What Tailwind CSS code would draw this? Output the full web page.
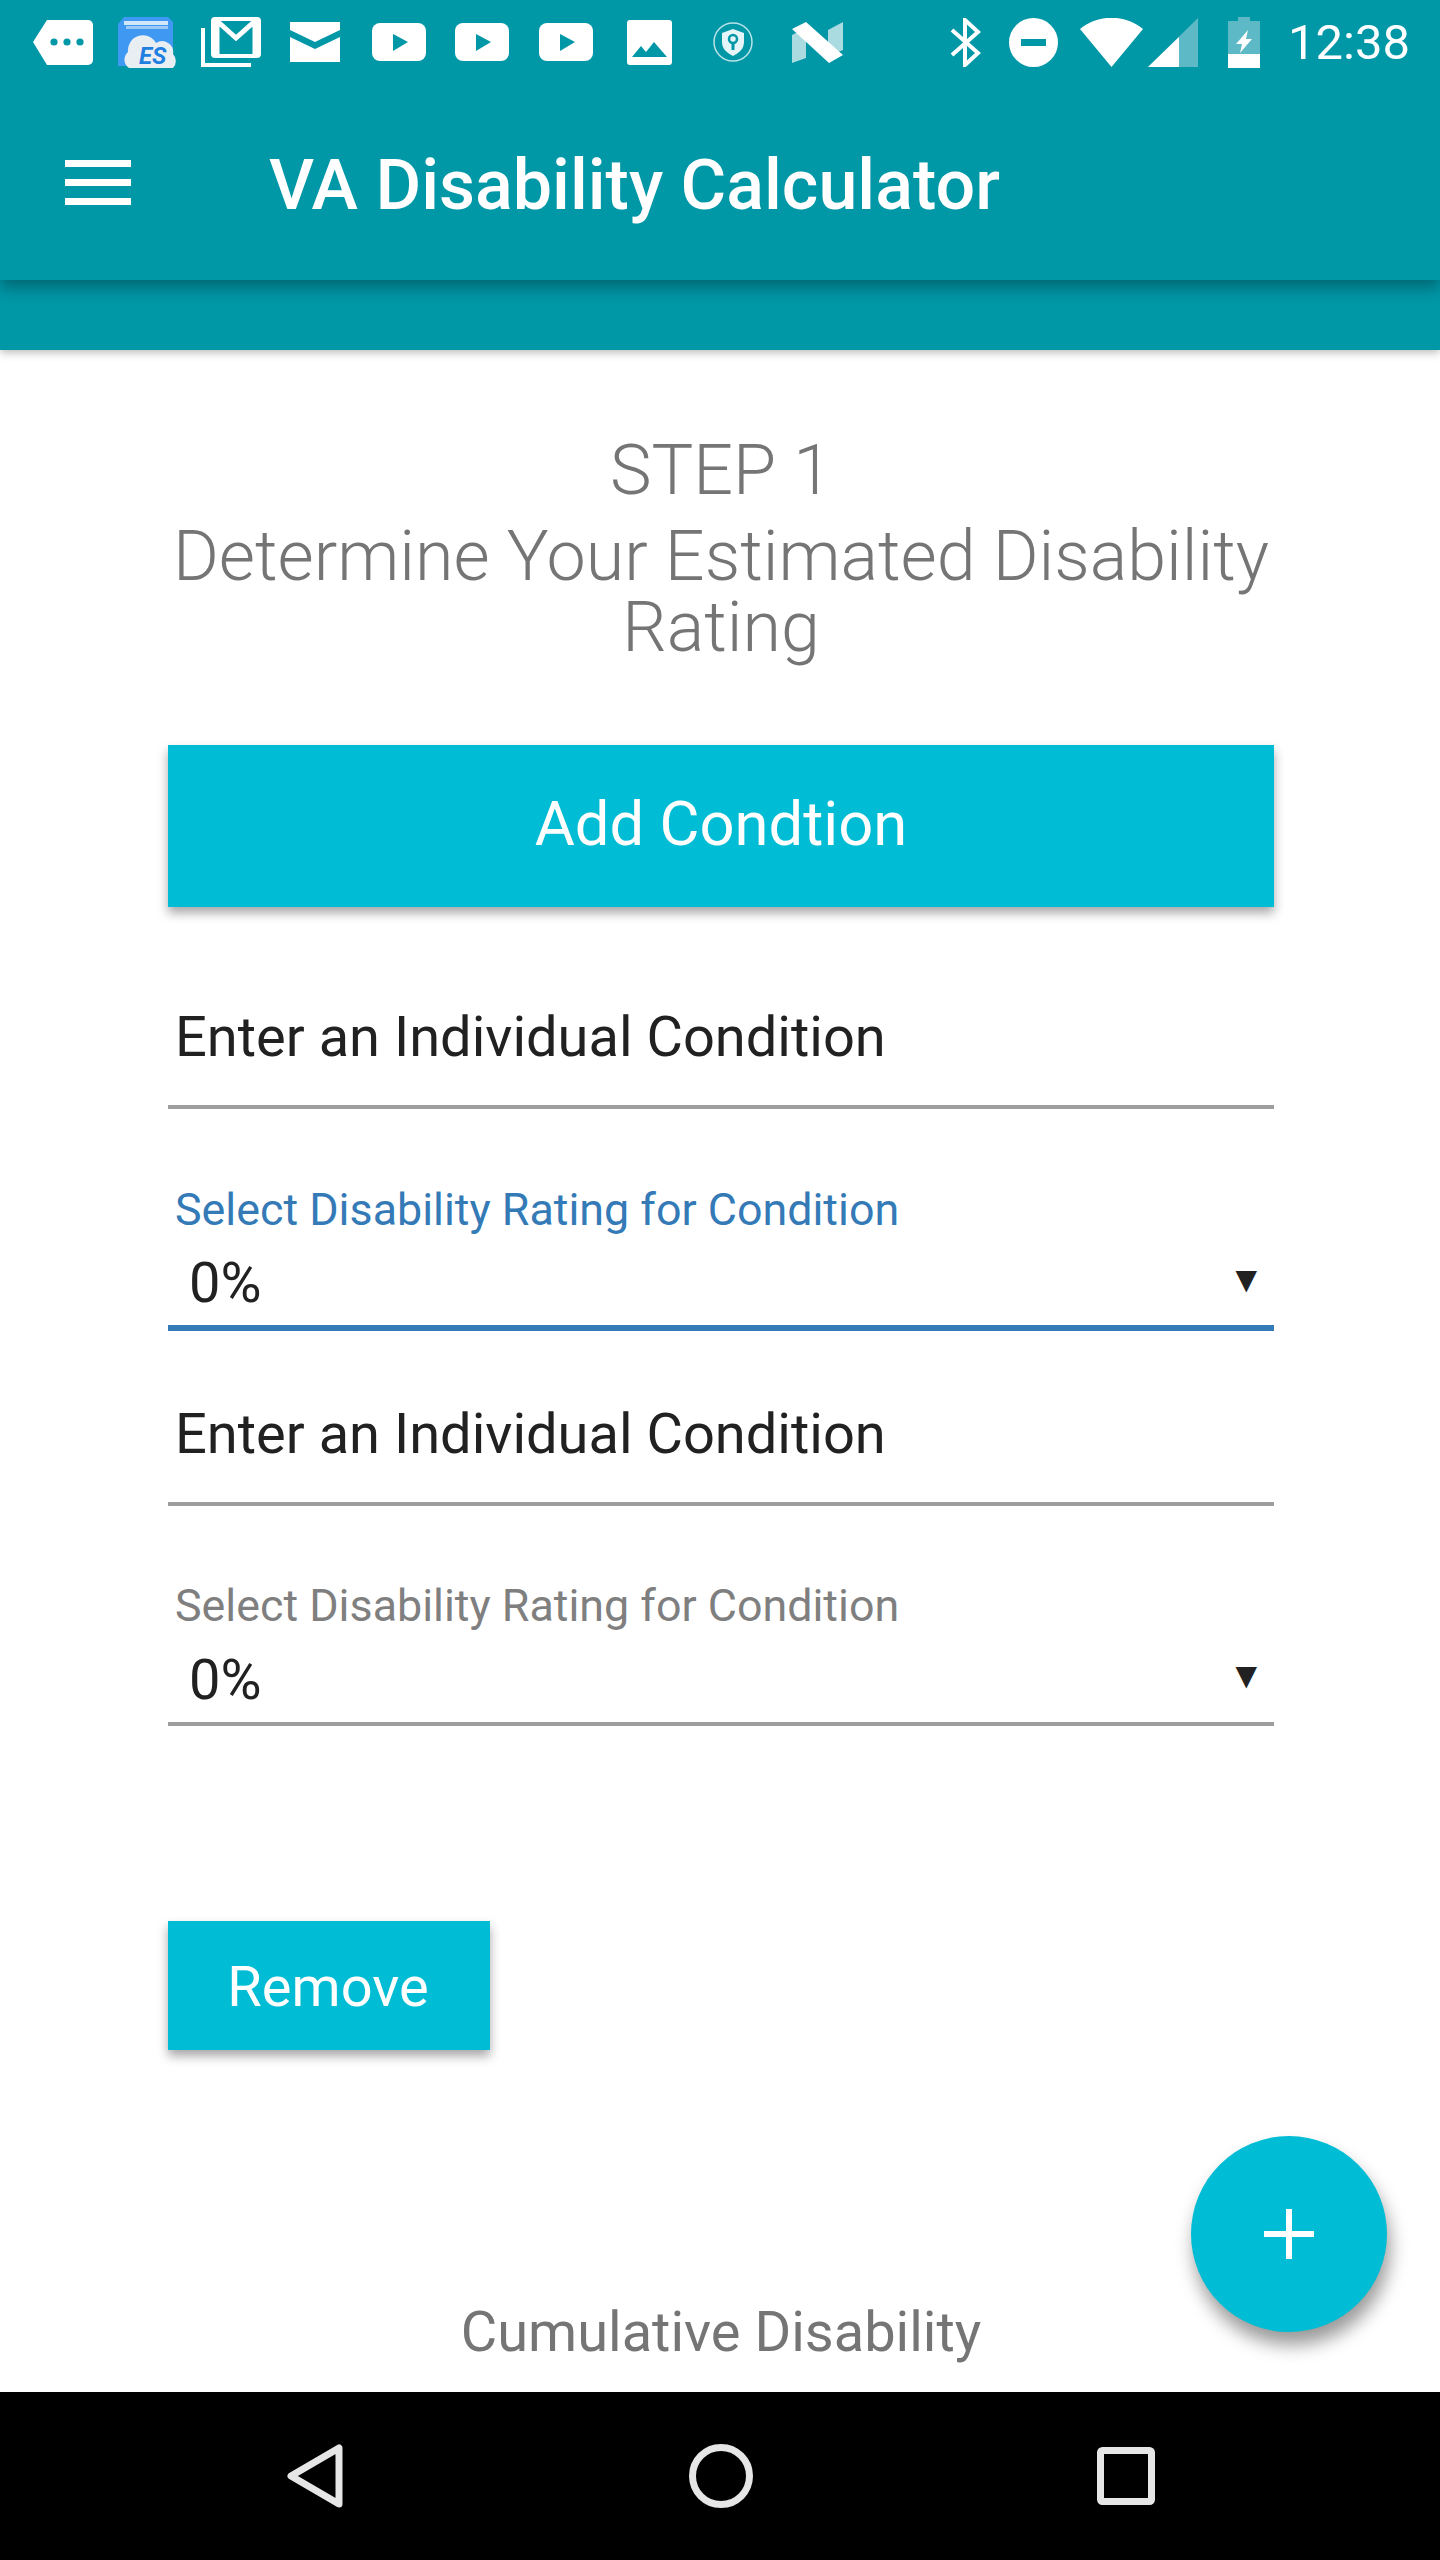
<!DOCTYPE html>
<html lang="en">
<head>
<meta charset="utf-8" />
<meta name="viewport" content="width=device-width, initial-scale=1.0" />
<title>VA Disability Calculator</title>
<script src="https://cdn.jsdelivr.net/npm/@tailwindcss/browser@4"></script>
</head>
<body class="bg-white font-['Roboto',sans-serif]">
<div class="relative flex flex-col w-[1440px] h-[2560px] overflow-hidden">

  <!-- status + toolbar -->
  <header class="relative z-20 bg-[#0097a7] h-[280px] shadow-[0_8px_14px_rgba(0,0,0,0.3)]">
    <div class="flex items-center h-[84px] pl-[33px] text-white">
      <svg class="w-[60px] h-[45px]" viewBox="0 0 60 45" fill="#fff"><path d="M14 0H55a5 5 0 0 1 5 5V40a5 5 0 0 1-5 5H14L0 22Z"/><g fill="#0097a7"><circle cx="21" cy="22" r="3.6"/><circle cx="34" cy="22" r="3.6"/><circle cx="47" cy="22" r="3.6"/></g></svg>
      <svg class="w-[58px] h-[56px] ml-[25px]" viewBox="0 -2 58 56"><path d="M0 8 6 1H50l5 5V50H0Z" fill="#3f98f2"/><path d="M6 5H50V9H6Z" fill="#cfe6fb"/><path d="M8 10H50v3H8Z" fill="#9cc9f5"/><path d="M11 52a10 10 0 0 1-1-16 15 15 0 0 1 28-9 11 11 0 0 1 17 11 10 10 0 0 1 0 14Z" fill="#e9eef2"/><text x="21" y="48" font-family="Roboto" font-size="24" font-weight="700" font-style="italic" fill="#1f7fe0">ES</text></svg>
      <svg class="w-[60px] h-[50px] ml-[25px]" viewBox="0 0 60 50" fill="none" stroke="#fff"><path d="M2 11V48H50" stroke-width="4"/><rect x="12" y="2" width="46" height="37" rx="2" stroke-width="4"/><path d="M16 38V4L35 21 54 4V38" stroke-width="5"/></svg>
      <svg class="w-[50px] h-[40px] ml-[29px]" viewBox="0 0 50 40" fill="#fff"><path d="M0 0H50V8L25 20 0 8Z"/><path d="M0 15 25 27 50 15V40H0Z"/></svg>
      <svg class="w-[54px] h-[38px] ml-[32px]" viewBox="0 0 54 38"><rect width="54" height="38" rx="8" fill="#fff"/><path d="M21 11 36 19 21 28Z" fill="#0097a7"/></svg>
      <svg class="w-[54px] h-[38px] ml-[29px]" viewBox="0 0 54 38"><rect width="54" height="38" rx="8" fill="#fff"/><path d="M21 11 36 19 21 28Z" fill="#0097a7"/></svg>
      <svg class="w-[54px] h-[38px] ml-[30px]" viewBox="0 0 54 38"><rect width="54" height="38" rx="8" fill="#fff"/><path d="M21 11 36 19 21 28Z" fill="#0097a7"/></svg>
      <svg class="w-[45px] h-[45px] ml-[34px]" viewBox="0 0 45 45"><rect width="45" height="45" rx="3" fill="#fff"/><path d="M5 37 14 26 19 32 27 22 40 37Z" fill="#0097a7"/></svg>
      <svg class="w-[40px] h-[40px] ml-[41px]" viewBox="0 0 40 40"><circle cx="20" cy="20" r="19" fill="none" stroke="#b9e3e8" stroke-width="1.5"/><path d="M20 7 31 11V20C31 27 26 31 20 34 14 31 9 27 9 20V11Z" fill="#e6f5f7"/><circle cx="20" cy="17" r="4" fill="none" stroke="#0097a7" stroke-width="2.5"/><path d="M20 21V28" stroke="#0097a7" stroke-width="3"/></svg>
      <svg class="w-[51px] h-[41px] ml-[39px]" viewBox="0 0 51 41"><path d="M0 13 14 6V36L0 41Z" fill="#a9dbe1"/><path d="M36 8 51 0V28L36 34Z" fill="#a9dbe1"/><path d="M0 7 14 0 51 33 37 41Z" fill="#fff"/></svg>
      <svg class="w-[31px] h-[49px] ml-[107px]" viewBox="0 0 31 49" fill="none" stroke="#fff" stroke-width="4"><path d="M2 12 28 35 15 47V2L28 14 2 37"/></svg>
      <svg class="w-[49px] h-[49px] ml-[28px]" viewBox="0 0 49 49"><circle cx="24.500" cy="24.500" r="24.500" fill="#fff"/><rect x="12" y="21" width="25" height="7" fill="#0097a7"/></svg>
      <svg class="w-[63px] h-[49px] ml-[22px]" viewBox="0 0 63 49"><path d="M0 11C18-4 45-4 63 11L31.500 49Z" fill="#fff"/></svg>
      <svg class="w-[50px] h-[49px] ml-[5px]" viewBox="0 0 50 49"><path d="M50 0V49H0Z" fill="#5cb9c5"/><path d="M31 19V49H0Z" fill="#fff"/></svg>
      <svg class="w-[32px] h-[51px] ml-[30px]" viewBox="0 0 32 51"><path d="M10 0H22V4H32V37H0V4H10Z" fill="#5cb9c5"/><path d="M0 37H32V51H0Z" fill="#fff"/><path d="M20 13 8 27H14L12 36 24 22H18Z" fill="#fff"/></svg>
      <span class="ml-[28px] text-[49px] leading-none">12:38</span>
    </div>
    <div class="flex items-center h-[196px] pl-[65px]">
      <div class="flex flex-col gap-[12px] w-[66px]">
        <span class="block h-[7px] bg-white"></span>
        <span class="block h-[7px] bg-white"></span>
        <span class="block h-[7px] bg-white"></span>
      </div>
      <h1 class="ml-[138px] pt-[6px] text-[70px] leading-none font-medium text-white">VA Disability Calculator</h1>
    </div>
  </header>
  <div class="relative z-10 bg-[#0097a7] h-[70px] shrink-0 shadow-[0_3px_8px_rgba(0,0,0,0.25)]"></div>

  <!-- page -->
  <main class="relative flex-1 bg-white pl-[168px] pr-[166px] pt-[84px]">
    <div class="text-center text-[#757575] font-light">
      <p class="text-[70px] leading-[72px]">STEP 1</p>
      <h2 class="text-[70px] leading-[71px] mt-[15px]">Determine Your Estimated Disability Rating</h2>
    </div>

    <button class="block w-full h-[162px] mt-[82px] pb-[4px] bg-[#00bcd4] text-white text-[61.500px] shadow-[0_6px_10px_rgba(0,0,0,0.35)]">Add Condtion</button>

    <div class="mt-[85px] h-[117px] pl-[7px] border-b-[4px] border-[#9e9e9e] text-[56px] leading-[90px] text-[#212121]">Enter an Individual Condition</div>

    <div class="mt-[72px]">
      <p class="pl-[7px] pt-[1px] text-[44.800px] leading-[55px] text-[#337ab7]">Select Disability Rating for Condition</p>
      <div class="flex justify-between items-center h-[88px] pt-[4px] pl-[21px] pr-[17px] text-[56px] text-[#212121]">0%<span class="mb-[6px] text-[28px] font-['DejaVu_Sans',sans-serif]">▼</span></div>
      <div class="h-[6px] bg-[#337ab7]"></div>
    </div>

    <div class="mt-[58px] h-[117px] pl-[7px] border-b-[4px] border-[#9e9e9e] text-[56px] leading-[90px] text-[#212121]">Enter an Individual Condition</div>

    <div class="mt-[72px]">
      <p class="pl-[7px] text-[44.800px] leading-[56px] text-[#7f7f7f]">Select Disability Rating for Condition</p>
      <div class="flex justify-between items-center h-[88px] pt-[4px] pl-[21px] pr-[17px] text-[56px] text-[#212121]">0%<span class="mb-[8px] text-[28px] font-['DejaVu_Sans',sans-serif]">▼</span></div>
      <div class="h-[4px] bg-[#9e9e9e]"></div>
    </div>

    <button class="block w-[322px] h-[129px] mt-[195px] pr-[2px] pt-[2px] bg-[#00bcd4] text-white text-[56px] shadow-[0_6px_10px_rgba(0,0,0,0.35)]">Remove</button>

    <p class="mt-[250px] text-center text-[56px] leading-[64px] text-[#757575]">Cumulative Disability</p>

    <button class="absolute left-[1191px] top-[1786px] flex items-center justify-center w-[196px] h-[196px] rounded-full bg-[#00bcd4] shadow-[3px_13px_18px_rgba(0,0,0,0.4)]">
      <svg class="w-[50px] h-[50px]" viewBox="0 0 50 50" fill="#fff"><rect x="22" width="6" height="50"/><rect y="22" width="50" height="6"/></svg>
    </button>
  </main>

  <!-- nav bar -->
  <nav class="flex items-center h-[168px] shrink-0 bg-black pl-[287px]">
    <svg class="w-[56px] h-[64px]" viewBox="0 0 56 64" fill="none" stroke="#e6e6e6" stroke-width="7" stroke-linejoin="round"><path d="M52 4V60L4 32Z"/></svg>
    <svg class="w-[64px] h-[64px] ml-[346px]" viewBox="0 0 64 64" fill="none" stroke="#e6e6e6" stroke-width="7"><circle cx="32" cy="32" r="28.500"/></svg>
    <svg class="w-[58px] h-[58px] ml-[344px]" viewBox="0 0 58 58" fill="none" stroke="#e6e6e6" stroke-width="7"><rect x="3.500" y="3.500" width="51" height="51" rx="2"/></svg>
  </nav>
</div>
</body>
</html>
